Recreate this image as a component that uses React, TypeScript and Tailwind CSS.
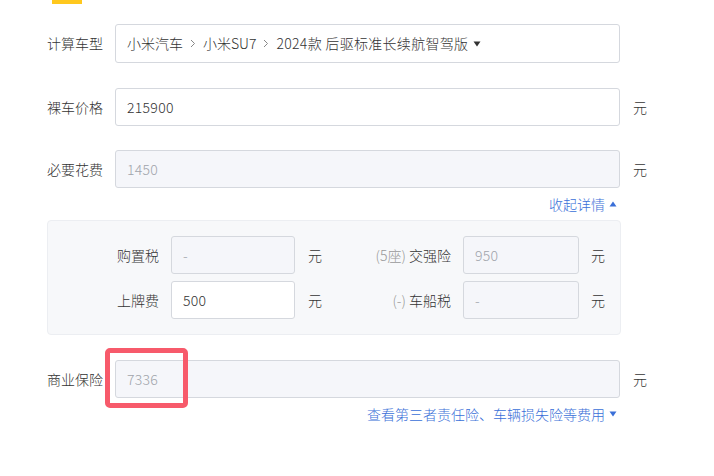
import React from "react";

const font = { fontFamily: '"Microsoft YaHei", "Noto Sans CJK SC", "Noto Sans", sans-serif' };

function Caret({ up = false, className = "" }: { up?: boolean; className?: string }) {
  return (
    <svg width="8" height="6" viewBox="0 0 8 6" className={className}>
      {up ? <path d="M4 0.5L7.5 5.5H0.5Z" fill="currentColor" /> : <path d="M0.5 0.5H7.5L4 5.5Z" fill="currentColor" />}
    </svg>
  );
}

function Chevron() {
  return (
    <svg width="6" height="9" viewBox="0 0 6 9" className="mx-[7px] text-[#888]">
      <path d="M1 1L4.5 4.5L1 8" fill="none" stroke="currentColor" strokeWidth="1" />
    </svg>
  );
}

function Field({ value, disabled = false, className = "" }: { value: string; disabled?: boolean; className?: string }) {
  return (
    <div
      className={`flex items-center rounded-[3px] border border-[#d5d8de] pl-[11px] text-[14px] tracking-[0.3px] ${
        disabled ? "bg-[#f5f6fa] text-[#a0a4ab]" : "bg-white text-[#333]"
      } ${className}`}
    >
      {value}
    </div>
  );
}

function Row({ label, children, unit = true }: { label: string; children: React.ReactNode; unit?: boolean }) {
  return (
    <div className="flex items-center">
      <div className="w-[68px] shrink-0 text-[14px] text-[#333]">{label}</div>
      {children}
      {unit && <span className="ml-[13px] text-[14px] text-[#333]">元</span>}
    </div>
  );
}

function SubRow({ left, leftVal, leftDisabled, hint, right, rightVal }: {
  left: string; leftVal: string; leftDisabled?: boolean; hint: string; right: string; rightVal: string;
}) {
  return (
    <div className="flex items-center">
      <div className="w-[123px] pr-[12px] text-right text-[14px] text-[#333]">{left}</div>
      <Field value={leftVal} disabled={leftDisabled} className="h-[38px] w-[124px]" />
      <span className="ml-[13px] w-[14px] text-[14px] text-[#333]">元</span>
      <div className="w-[141px] pr-[12px] text-right text-[14px] text-[#333]">
        <span className="text-[#999]">{hint}</span> {right}
      </div>
      <Field value={rightVal} disabled className="h-[38px] w-[116px]" />
      <span className="ml-[12px] text-[14px] text-[#333]">元</span>
    </div>
  );
}

export default function App() {
  return (
    <div className="min-h-[476px] w-[714px] bg-white font-light" style={font}>
      <div className="ml-[52px] h-[4px] w-[30px] bg-[#ffc81e]" />
      <div className="pl-[47px]">
        <div className="mt-[20px]">
          <Row label="计算车型" unit={false}>
            <div className="flex h-[39px] w-[505px] items-center rounded-[3px] border border-[#d5d8de] bg-white pl-[11px] text-[14px] text-[#333]">
              <span>小米汽车</span>
              <Chevron />
              <span>小米SU7</span>
              <Chevron />
              <span className="tracking-[0.3px]">2024款 后驱标准长续航智驾版</span>
              <Caret className="ml-[5px] text-[#333]" />
            </div>
          </Row>
        </div>
        <div className="mt-[25px]">
          <Row label="裸车价格">
            <Field value="215900" className="h-[38px] w-[505px]" />
          </Row>
        </div>
        <div className="mt-[24px]">
          <Row label="必要花费">
            <Field value="1450" disabled className="h-[38px] w-[505px]" />
          </Row>
        </div>
        <div className="mt-[6px] flex h-[20px] w-[570px] items-center justify-end text-[14px] text-[#3a6fd8]">
          收起详情
          <Caret up className="ml-[4px]" />
        </div>
        <div className="mt-[6px] flex w-[574px] flex-col gap-[7px] rounded-[4px] border border-[#eceef2] bg-[#f7f8fa] py-[15px]">
          <SubRow left="购置税" leftVal="-" leftDisabled hint="(5座)" right="交强险" rightVal="950" />
          <SubRow left="上牌费" leftVal="500" hint="(-)" right="车船税" rightVal="-" />
        </div>
        <div className="relative mt-[25px]">
          <Row label="商业保险">
            <Field value="7336" disabled className="h-[38px] w-[505px]" />
          </Row>
          <div className="absolute left-[58px] top-[-12px] h-[60px] w-[83px] rounded-[5px] border-[5px] border-[#f75a6b]" />
        </div>
        <div className="mt-[6px] flex h-[20px] w-[570px] items-center justify-end text-[14px] text-[#3a6fd8]">
          查看第三者责任险、车辆损失险等费用
          <Caret className="ml-[4px]" />
        </div>
      </div>
    </div>
  );
}
